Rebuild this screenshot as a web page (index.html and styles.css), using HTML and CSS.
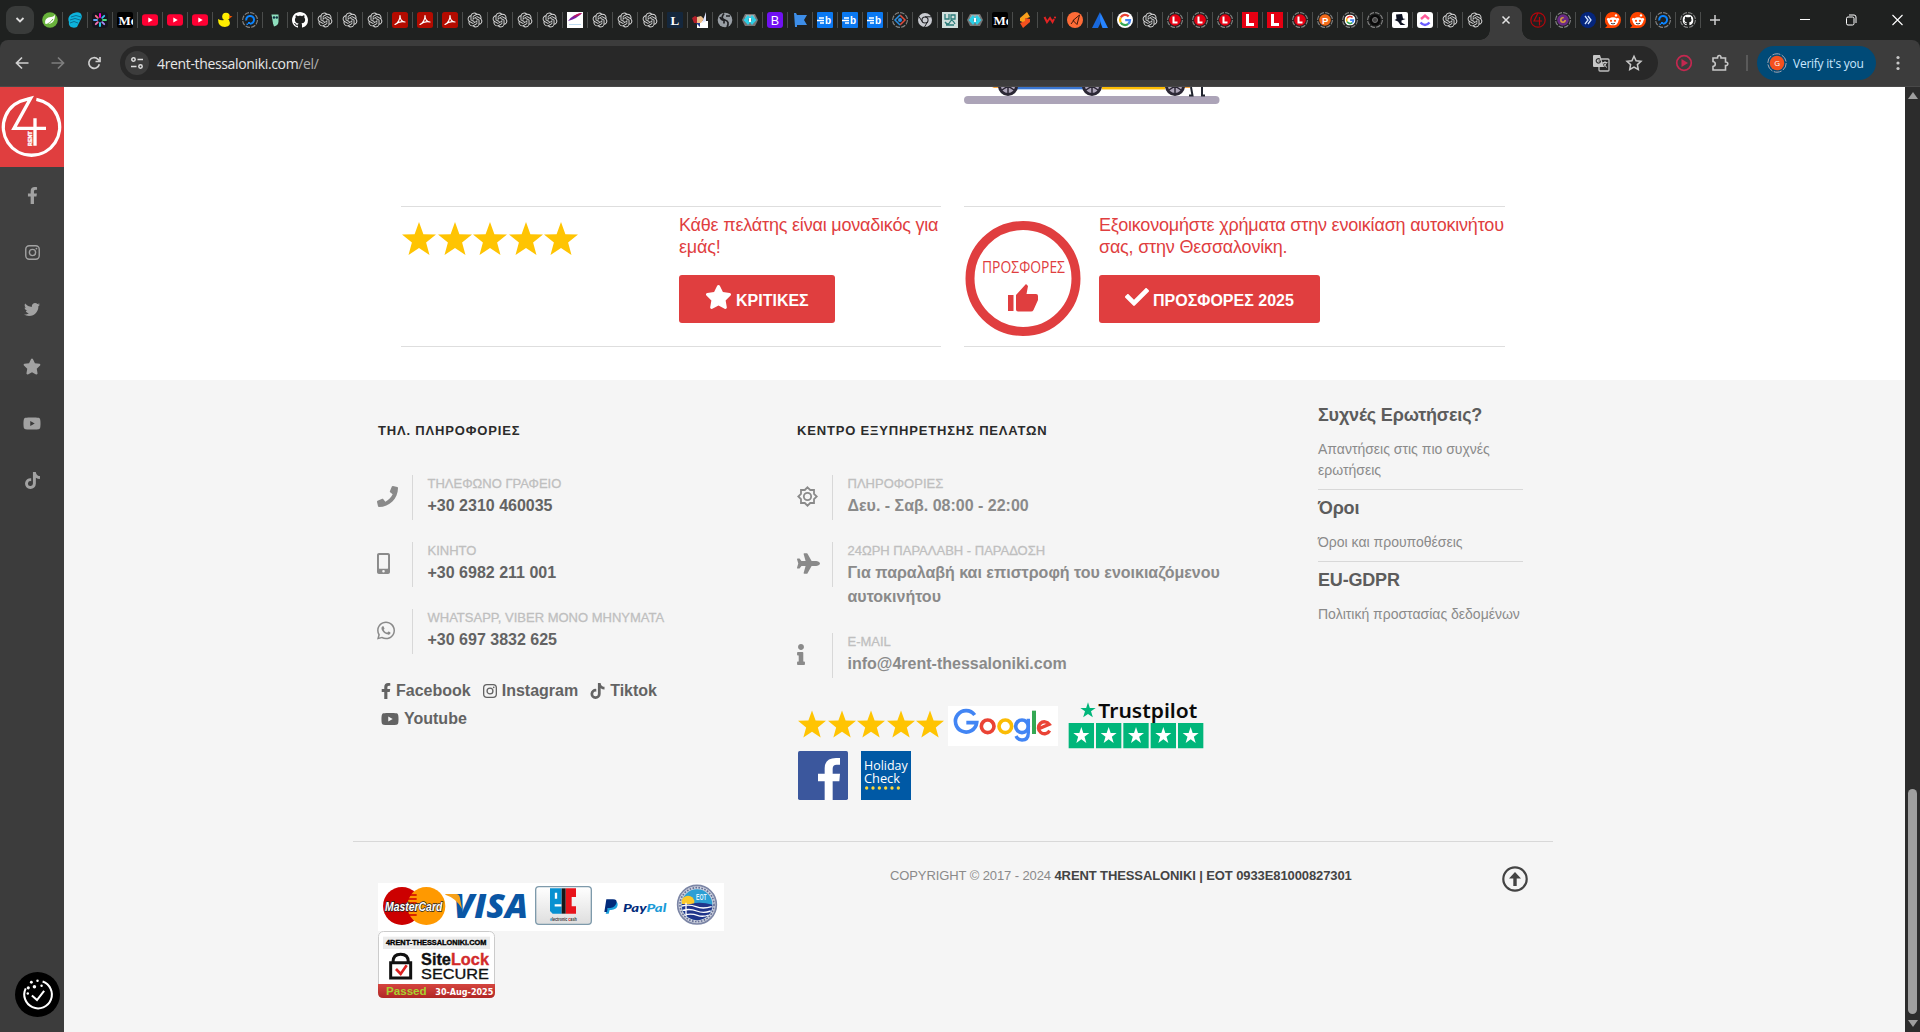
FILE: index.html
```html
<!DOCTYPE html>
<html lang="el">
<head>
<meta charset="utf-8">
<title>4Rent Thessaloniki</title>
<link rel="stylesheet" href="styles.css">
</head>
<body>
<svg class="defs" aria-hidden="true">
  <defs>
    <symbol id="ring" viewBox="0 0 16 16"><circle cx="8" cy="8" r="7.4" fill="none" stroke="#858585" stroke-width="1.1" stroke-dasharray="4.6 1.2"/></symbol>
    <symbol id="t-leaf" viewBox="0 0 16 16"><circle cx="8" cy="8" r="7.8" fill="#68b23b"/><path d="M13 2.500C13 10 10 12.500 3.500 12C2 8 5 5 9 5C11 5 12.300 4 13 2.500Z" fill="#fff"/><path d="M3 13C7 11.500 9 10 11 7" stroke="#68b23b" fill="none"/></symbol>
    <symbol id="t-shell" viewBox="0 0 16 16"><path d="M7 1C12-1 16 2 14.500 6L10 15C5 17 1 14 2 10C0 6 3 2 7 1Z" fill="#0db3dc"/><path d="M4 5Q9 2 14 5M3 8Q8 5 13 8M3 11Q7 8 11 11" stroke="#0a6e92" fill="none"/></symbol>
    <symbol id="t-spark" viewBox="0 0 16 16"><rect width="16" height="16" rx="4" fill="#15151d"/><g stroke-width="1.900" stroke-linecap="round"><path d="M8 2v3" stroke="#f0c"/><path d="M12.200 3.800l-2 2" stroke="#38bdf8"/><path d="M14 8h-3" stroke="#4ade80"/><path d="M12.200 12.200l-2-2" stroke="#a78bfa"/><path d="M8 14v-3" stroke="#22d3ee"/><path d="M3.800 12.200l2-2" stroke="#f472b6"/><path d="M2 8h3" stroke="#60a5fa"/><path d="M3.800 3.800l2 2" stroke="#fb7185"/></g></symbol>
    <symbol id="t-me" viewBox="0 0 16 16"><rect width="16" height="16" rx="2" fill="#000"/><text x="1.500" y="12.500" class="serif" font-weight="bold" font-size="13" fill="#fff">Me</text></symbol>
    <symbol id="t-yt" viewBox="0 0 16 16"><rect y="2.300" width="16" height="11.400" rx="3" fill="#ff0033"/><path d="M6.300 5.500v5L10.700 8z" fill="#fff"/></symbol>
    <symbol id="t-duck" viewBox="0 0 16 16"><circle cx="9" cy="4.500" r="3.800" fill="#fe0"/><path d="M1 7q3 2 6 1l5 0q3 6-4 7Q1 15 1 7z" fill="#fe0"/><path d="M12 3.500l3.500 1-3 1.700z" fill="#f50"/></symbol>
    <symbol id="t-do" viewBox="0 0 16 16"><use href="#ring"/><path d="M8 11.700A3.900 3.900 0 1 0 4.300 8.500" fill="none" stroke="#0a84ff" stroke-width="2"/><path d="M6 10h2v2H6zM4.500 11.500H6V13H4.500z" fill="#0a84ff"/></symbol>
    <symbol id="t-owl" viewBox="0 0 16 16"><path d="M4.500 2.500h7v7q0 4-4.500 5l-1-3z" fill="#8fe0be"/><circle cx="7" cy="5.500" r="1.300" fill="#134"/><circle cx="9.800" cy="5.500" r="1.200" fill="#134"/></symbol>
    <symbol id="t-gh" viewBox="0 0 16 16"><path fill="#fff" d="M8 0C3.580 0 0 3.580 0 8c0 3.540 2.290 6.530 5.470 7.590.4.070.55-.17.55-.38 0-.19-.01-.82-.01-1.490-2.010.37-2.530-.49-2.690-.94-.09-.23-.48-.94-.82-1.130-.28-.15-.68-.52-.01-.53.63-.01 1.080.58 1.230.82.72 1.210 1.870.87 2.330.66.070-.52.28-.87.51-1.070-1.780-.2-3.640-.89-3.640-3.950 0-.87.31-1.590.82-2.150-.08-.2-.36-1.020.080-2.120 0 0 .67-.21 2.200.82.64-.18 1.320-.27 2-.27s1.360.090 2 .27c1.530-1.040 2.200-.82 2.200-.82.44 1.100.16 1.920.080 2.120.51.56.82 1.270.82 2.150 0 3.070-1.870 3.750-3.650 3.950.29.25.54.73.54 1.480 0 1.070-.01 1.930-.01 2.200 0 .21.15.46.55.38A8.010 8.010 0 0 0 16 8c0-4.420-3.580-8-8-8z"/></symbol>
    <symbol id="t-gpt" viewBox="-1 -1 26 26"><path fill="#d8d8d8" d="M22.2819 9.8211a5.9847 5.9847 0 0 0-.5157-4.9108 6.0462 6.0462 0 0 0-6.5098-2.9A6.0651 6.0651 0 0 0 4.9807 4.1818a5.9847 5.9847 0 0 0-3.9977 2.9 6.0462 6.0462 0 0 0 .7427 7.0966 5.98 5.98 0 0 0 .511 4.9107 6.051 6.051 0 0 0 6.5146 2.9001A5.9847 5.9847 0 0 0 13.2599 24a6.0557 6.0557 0 0 0 5.7718-4.2058 5.9894 5.9894 0 0 0 3.9977-2.9001 6.0557 6.0557 0 0 0-.7475-7.0729zm-9.022 12.6081a4.4755 4.4755 0 0 1-2.8764-1.0408l.1419-.0804 4.7783-2.7582a.7948.7948 0 0 0 .3927-.6813v-6.7369l2.02 1.1686a.071.071 0 0 1 .038.052v5.5826a4.504 4.504 0 0 1-4.4945 4.4944zm-9.6607-4.1254a4.4708 4.4708 0 0 1-.5346-3.0137l.142.0852 4.783 2.7582a.7712.7712 0 0 0 .7806 0l5.8428-3.3685v2.3324a.0804.0804 0 0 1-.0332.0615L9.74 19.9502a4.4992 4.4992 0 0 1-6.1408-1.6464zM2.3408 7.8956a4.485 4.485 0 0 1 2.3655-1.9728V11.6a.7664.7664 0 0 0 .3879.6765l5.8144 3.3543-2.0201 1.1685a.0757.0757 0 0 1-.071 0l-4.8303-2.7865A4.504 4.504 0 0 1 2.3408 7.872zm16.5963 3.8558L13.1038 8.364 15.1192 7.2a.0757.0757 0 0 1 .071 0l4.8303 2.7913a4.4944 4.4944 0 0 1-.6765 8.1042v-5.6772a.79.79 0 0 0-.407-.667zm2.0107-3.0231l-.142-.0852-4.7735-2.7818a.7759.7759 0 0 0-.7854 0L9.409 9.2297V6.8974a.0662.0662 0 0 1 .0284-.0615l4.8303-2.7866a4.4992 4.4992 0 0 1 6.6802 4.66zM8.3065 12.863l-2.02-1.1638a.0804.0804 0 0 1-.038-.0567V6.0742a4.4992 4.4992 0 0 1 7.3757-3.4537l-.142.0805L8.704 5.459a.7948.7948 0 0 0-.3927.6813zm1.0976-2.3654l2.602-1.4998 2.6069 1.4998v2.9994l-2.5974 1.4997-2.6067-1.4997Z"/></symbol>
    <symbol id="t-pdf" viewBox="0 0 16 16"><rect width="16" height="16" rx="2.500" fill="#b30b00"/><path d="M3 12.500C6 11 8.300 7 8 3.500C7.800 7 10 10 13 10C9.500 9 6 10 3 12.500Z" fill="none" stroke="#fff" stroke-width="1.200" stroke-linejoin="round"/></symbol>
    <symbol id="t-feather" viewBox="0 0 16 16"><rect width="16" height="16" fill="#fff"/><path d="M1 9Q6 2 15 1Q11 6 1 9z" fill="#7b1fa2"/><path d="M6 5Q10 1 15 1Q12 4 6 5z" fill="#c2185b"/><path d="M2 12.500h12" stroke="#bcd9ee"/></symbol>
    <symbol id="t-ln" viewBox="0 0 16 16"><rect width="16" height="16" rx="1" fill="#14273d"/><text x="3.500" y="12.500" class="serif" font-weight="bold" font-size="13" fill="#fff">L</text></symbol>
    <symbol id="t-pic" viewBox="0 0 16 16"><path d="M5 9h11v7H5z" fill="#fff"/><path d="M0 6l3-2 4 2v5H2z" fill="#b3202a"/><path d="M5 5l4-1 3 3-3 4H5z" fill="#eebf8c"/><path d="M14 0v9l-4 2z" fill="#dfe4ff"/><path d="M4 11h4v4z" fill="#223a8c"/></symbol>
    <symbol id="t-globe" viewBox="0 0 16 16"><circle cx="8" cy="8" r="7.300" fill="#9aa0a6"/><path d="M7 1.500q-4 5 1 6.500t2 7M3 5q1 3 4 3.500v3M9 4h4" stroke="#202124" stroke-width="1.700" fill="none"/></symbol>
    <symbol id="t-cyan" viewBox="0 0 16 16"><path d="M3 2h10l3 6-3 6H3L0 8z" fill="#777"/><path d="M4 3h8l1 3H3z" fill="#aaa"/><path d="M6 3L1.500 8 6 13l2-2.500L6 8l2-2.500zM10 3l4.500 5-4.500 5-2-2.500L10 8 8 5.500z" fill="#2bd0e8"/><path d="M7 6h2v4H7z" fill="#fff"/></symbol>
    <symbol id="t-b" viewBox="0 0 16 16"><rect width="16" height="16" rx="3" fill="#7011f2"/><text x="3.700" y="12.600" font-size="12.500" fill="#fff">B</text></symbol>
    <symbol id="t-flag" viewBox="0 0 16 16"><path d="M2 1h2l1 2h10l-3 5 3 5H5v2H3z" fill="#3d8ee8"/></symbol>
    <symbol id="t-eb" viewBox="0 0 16 16"><rect width="16" height="16" rx="1" fill="#0a78f0"/><path d="M2 6h5M0 8.500h7M3 11h4" stroke="#fff" stroke-width="1.300"/><text x="8" y="11.800" font-weight="bold" font-size="10" fill="#fff">b</text></symbol>
    <symbol id="t-diamond" viewBox="0 0 16 16"><use href="#ring"/><path d="M8 3L13 8 8 13" fill="none" stroke="#e24a3b" stroke-width="1.500"/><path d="M8 3L3 8l5 5" fill="none" stroke="#2b8de0" stroke-width="1.500"/><circle cx="8" cy="8" r="2" fill="#2b8de0"/></symbol>
    <symbol id="t-chrome" viewBox="0 0 16 16"><circle cx="8" cy="8" r="7" fill="#c9cbd0"/><circle cx="8" cy="8" r="3.600" fill="#202124"/><circle cx="8" cy="8" r="2.500" fill="#c9cbd0"/><path d="M8 4.800h6.500M5 9.500L2 4.500M10.500 10l-3 5" stroke="#202124"/></symbol>
    <symbol id="t-teal" viewBox="0 0 16 16"><rect width="16" height="16" fill="#cfdfdc"/><path d="M3 2v5h4V2M9 3h4v4H9zM3 10q3 4 5 0t5 2M4 13h8" stroke="#2b7c79" stroke-width="1.300" fill="none"/></symbol>
    <symbol id="t-s" viewBox="0 0 16 16"><path d="M10 0L3 6v3l5 2V7l5-2z" fill="#f9a01b"/><path d="M6 16l7-6V7L8 6v3l-5 2z" fill="#f4511e"/></symbol>
    <symbol id="t-w" viewBox="0 0 16 16"><path d="M2.500 5l2.500 5 3-4 2.500 4 1.500-3" fill="none" stroke="#e22323" stroke-width="2"/><circle cx="13" cy="5.500" r="1.100" fill="#e22323"/></symbol>
    <symbol id="t-post" viewBox="0 0 16 16"><circle cx="8" cy="8" r="8" fill="#ff6c37"/><path d="M12.500 3L6 8.500l4 4zM7 8l-3 4" stroke="#40180a" fill="none"/></symbol>
    <symbol id="t-atl" viewBox="0 0 16 16"><path d="M8 0q3 8-2 16H0z" fill="#1868db"/><path d="M8.500 1L16 16h-5.500Q7 9 8.500 1z" fill="#2684ff"/></symbol>
    <symbol id="gmark" viewBox="0 0 16 16"><circle cx="8" cy="8" r="8" fill="#fff"/><g fill="none" stroke-width="2.300"><path d="M11.700 4.400A5 5 0 0 0 3.700 5.500" stroke="#ea4335"/><path d="M3.700 5.500a5 5 0 0 0 0 5" stroke="#fbbc05"/><path d="M3.700 10.500a5 5 0 0 0 7.500 1.400" stroke="#34a853"/><path d="M11.200 11.900A5 5 0 0 0 13 8.200H8.200" stroke="#4285f4"/></g></symbol>
    <symbol id="t-l" viewBox="0 0 16 16"><use href="#ring"/><circle cx="8" cy="8" r="5.800" fill="#e60012"/><path d="M6.500 4.500v6h4" stroke="#fff" stroke-width="2" fill="none"/></symbol>
    <symbol id="t-lsq" viewBox="0 0 16 16"><rect width="16" height="16" fill="#e60012"/><path d="M5.500 2v10.500H12" stroke="#fff" stroke-width="3" fill="none"/></symbol>
    <symbol id="t-p" viewBox="0 0 16 16"><use href="#ring"/><circle cx="8" cy="8" r="5.800" fill="#f26a1b"/><text x="5" y="11.500" font-weight="bold" font-size="9.500" fill="#fff">P</text></symbol>
    <symbol id="t-gr" viewBox="0 0 16 16"><use href="#ring"/><use href="#gmark" x="2.500" y="2.500" width="11" height="11"/></symbol>
    <symbol id="t-dark" viewBox="0 0 16 16"><use href="#ring"/><circle cx="8" cy="8" r="5.500" fill="#090909"/><circle cx="8" cy="8" r="2.500" fill="#444" stroke="#777"/></symbol>
    <symbol id="t-hat" viewBox="0 0 16 16"><rect width="16" height="16" rx="2" fill="#fff"/><path d="M4 2.500l6-.5 1 4.500 2.500.5-4 1.500v2l4 2.500H8.500L6 9.500 2.500 8l2-1z" fill="#0c1120"/></symbol>
    <symbol id="t-cu" viewBox="0 0 16 16"><rect width="16" height="16" rx="3" fill="#fff"/><path d="M4 7l4-3.500L12 7" fill="none" stroke="#ff5c9a" stroke-width="2.400"/><path d="M3.500 10.500q4.500 5 9 0" fill="none" stroke="#6a5cff" stroke-width="2.400"/></symbol>
    <symbol id="t-4" viewBox="0 0 16 16"><circle cx="8" cy="8" r="7.200" fill="none" stroke="#b3060c" stroke-width="1.200"/><path d="M8 1L4 9h8M9.500 5v8.500" fill="none" stroke="#b3060c" stroke-width="1.200"/></symbol>
    <symbol id="t-c" viewBox="0 0 16 16"><use href="#ring"/><circle cx="8" cy="8" r="5.800" fill="#6b2a86"/><circle cx="8" cy="8" r="2.200" fill="none" stroke="#d8a13a" stroke-width="1.500" stroke-dasharray="10 4"/></symbol>
    <symbol id="t-ch" viewBox="0 0 16 16"><circle cx="8" cy="8" r="8" fill="#04257c"/><path d="M5 4l3 4-3 4M8 4l3 4-3 4" fill="none" stroke="#cfe2ff" stroke-width="1.300"/></symbol>
    <symbol id="t-rd" viewBox="0 0 16 16"><path d="M8 0a8 8 0 1 1 0 16H0l2.300-2.300A8 8 0 0 1 8 0z" fill="#ff4500"/><ellipse cx="8" cy="9.300" rx="5.200" ry="4" fill="#fff"/><circle cx="3.300" cy="7.500" r="1.400" fill="#fff"/><circle cx="12.700" cy="7.500" r="1.400" fill="#fff"/><circle cx="11" cy="3.400" r="1.200" fill="#fff"/><circle cx="6" cy="8.800" r="1.100" fill="#ff4500"/><circle cx="10" cy="8.800" r="1.100" fill="#ff4500"/><path d="M6 11.300q2 1.300 4 0" stroke="#111" fill="none" stroke-width=".8"/></symbol>
    <symbol id="t-ghr" viewBox="0 0 16 16"><use href="#ring"/><use href="#t-gh" x="2.500" y="2.500" width="11" height="11"/></symbol>

    <symbol id="facebook" viewBox="0 0 320 512"><path d="M279.14 288l14.22-92.66h-88.91v-60.13c0-25.35 12.42-50.06 52.24-50.06h40.42V6.26S260.43 0 225.36 0c-73.22 0-121.08 44.38-121.08 124.72v70.62H22.89V288h81.39v224h100.17V288z"/></symbol>
    <symbol id="instagram" viewBox="0 0 448 512"><rect x="21" y="53" width="406" height="406" rx="105" fill="none" stroke="currentColor" stroke-width="42"/><circle cx="224" cy="256" r="94" fill="none" stroke="currentColor" stroke-width="42"/><circle cx="343" cy="137" r="27"/></symbol>
    <symbol id="twitter" viewBox="0 0 512 512"><path d="M459.37 151.716c.325 4.548.325 9.097.325 13.645 0 138.72-105.583 298.558-298.558 298.558-59.452 0-114.68-17.219-161.137-47.106 8.447.974 16.568 1.299 25.34 1.299 49.055 0 94.213-16.568 130.274-44.832-46.132-.975-84.792-31.188-98.112-72.772 6.498.974 12.995 1.624 19.818 1.624 9.421 0 18.843-1.3 27.614-3.573-48.081-9.747-84.143-51.98-84.143-102.985v-1.299c13.969 7.797 30.214 12.67 47.431 13.319-28.264-18.843-46.781-51.005-46.781-87.391 0-19.492 5.197-37.36 14.294-52.954 51.655 63.675 129.3 105.258 216.365 109.807-1.624-7.797-2.599-15.918-2.599-24.04 0-57.828 46.782-104.934 104.934-104.934 30.213 0 57.502 12.67 76.67 33.137 23.715-4.548 46.456-13.32 66.599-25.34-7.798 24.366-24.366 44.833-46.132 57.827 21.117-2.273 41.584-8.122 60.426-16.243-14.292 20.791-32.161 39.308-52.628 54.253z"/></symbol>
    <symbol id="star" viewBox="0 0 576 512"><path d="M259.3 17.8L194 150.2 47.9 171.5c-26.2 3.8-36.7 36.1-17.7 54.6l105.7 103-25 145.5c-4.5 26.3 23.2 46 46.4 33.7L288 439.6l130.7 68.7c23.2 12.2 50.9-7.4 46.4-33.7l-25-145.5 105.7-103c19-18.5 8.5-50.8-17.7-54.6L382 150.2 316.7 17.8c-11.7-23.6-45.600-23.900-57.400 0z"/></symbol>
    <symbol id="youtube" viewBox="0 0 576 512"><path d="M549.655 124.083c-6.281-23.65-24.787-42.276-48.284-48.597C458.781 64 288 64 288 64S117.22 64 74.629 75.486c-23.497 6.322-42.003 24.947-48.284 48.597-11.412 42.867-11.412 132.305-11.412 132.305s0 89.438 11.412 132.305c6.281 23.65 24.787 41.5 48.284 47.821C117.22 448 288 448 288 448s170.78 0 213.371-11.486c23.497-6.321 42.003-24.171 48.284-47.821 11.412-42.867 11.412-132.305 11.412-132.305s0-89.438-11.412-132.305zm-317.51 213.508V175.185l142.739 81.205-142.739 81.201z"/></symbol>
    <symbol id="tiktok" viewBox="0 0 448 512"><path d="M448 209.91a210.06 210.06 0 0 1-122.77-39.25v178.72A162.55 162.55 0 1 1 185 188.31v89.89a74.62 74.62 0 1 0 52.23 71.18V0h88a121.18 121.18 0 0 0 1.860 22.17A122.18 122.18 0 0 0 381 102.39a121.43 121.43 0 0 0 67 20.14z"/></symbol>
    <symbol id="phone" viewBox="0 0 512 512"><path d="M493.4 24.6l-104-24c-11.3-2.6-22.9 3.3-27.5 13.9l-48 112c-4.2 9.8-1.4 21.3 6.9 28l60.6 49.6c-36 76.7-98.9 140.5-177.2 177.2l-49.6-60.6c-6.8-8.3-18.2-11.1-28-6.9l-112 48C3.9 366.5-2 378.1.6 389.4l24 104C27.1 504.2 36.7 512 48 512c256.1 0 464-207.5 464-464 0-11.2-7.7-20.9-18.6-23.4z"/></symbol>
    <symbol id="mobile" viewBox="0 0 320 512"><path fill-rule="evenodd" d="M272 0H48C21.500 0 0 21.500 0 48v416c0 26.500 21.500 48 48 48h224c26.500 0 48-21.500 48-48V48c0-26.500-21.500-48-48-48zM160 480a32 32 0 1 1 0-64 32 32 0 0 1 0 64zm112-108c0 6.600-5.400 12-12 12H60c-6.600 0-12-5.400-12-12V60c0-6.600 5.400-12 12-12h200c6.600 0 12 5.400 12 12z"/></symbol>
    <symbol id="whatsapp" viewBox="0 0 448 512"><path d="M380.9 97.1C339 55.1 283.2 32 223.9 32c-122.4 0-222 99.6-222 222 0 39.1 10.2 77.3 29.6 111L0 480l117.7-30.9c32.4 17.7 68.9 27 106.1 27h.1c122.3 0 224.1-99.6 224.1-222 0-59.3-25.2-115-67.1-157zm-157 341.6c-33.2 0-65.7-8.9-94-25.7l-6.7-4-69.8 18.3L72 359.2l-4.4-7c-18.5-29.4-28.2-63.3-28.2-98.2 0-101.7 82.8-184.5 184.6-184.5 49.3 0 95.6 19.2 130.4 54.1 34.8 34.9 56.2 81.2 56.1 130.5 0 101.8-84.9 184.6-186.6 184.6zm101.2-138.2c-5.5-2.8-32.8-16.2-37.9-18-5.1-1.9-8.8-2.8-12.5 2.8-3.7 5.6-14.3 18-17.6 21.8-3.2 3.7-6.5 4.2-12 1.4-32.6-16.3-54-29.1-75.5-66-5.7-9.8 5.7-9.1 16.3-30.3 1.8-3.7.9-6.9-.5-9.7-1.4-2.8-12.5-30.1-17.1-41.2-4.5-10.8-9.1-9.3-12.5-9.5-3.2-.2-6.9-.2-10.6-.2-3.7 0-9.7 1.4-14.8 6.9-5.1 5.6-19.4 19-19.4 46.3 0 27.3 19.9 53.7 22.6 57.4 2.8 3.7 39.1 59.7 94.8 83.8 35.2 15.2 49 16.5 66.6 13.9 10.7-1.6 32.8-13.4 37.4-26.4 4.6-13 4.6-24.1 3.2-26.4-1.3-2.5-5-3.9-10.5-6.6z"/></symbol>
    <symbol id="gear" viewBox="0 0 20 20"><path d="M10 1.200l2.600 2.600h3.600v3.600L18.800 10l-2.600 2.600v3.600h-3.600L10 18.800l-2.600-2.600H3.800v-3.600L1.200 10l2.600-2.600V3.800h3.600z" fill="none" stroke="currentColor" stroke-width="1.700"/><circle cx="10" cy="10" r="3.500" fill="none" stroke="currentColor" stroke-width="1.700"/></symbol>
    <symbol id="plane" viewBox="0 0 576 512"><path d="M480 192H365.71L260.61 8.06A16.014 16.014 0 0 0 246.71 0h-65.5c-10.63 0-18.3 10.17-15.38 20.39L214.86 192H112l-43.2-57.6c-3.02-4.03-7.77-6.4-12.8-6.4H16.01C5.6 128-2.04 137.78.49 147.88L32 256 .49 364.12C-2.04 374.22 5.6 384 16.01 384H56c5.04 0 9.78-2.37 12.8-6.4L112 320h102.86l-49.03 171.6c-2.92 10.22 4.75 20.4 15.38 20.4h65.5c5.74 0 11.04-3.08 13.89-8.06L365.71 320H480c35.35 0 96-28.65 96-64s-60.65-64-96-64z"/></symbol>
    <symbol id="info" viewBox="0 0 192 512"><path d="M20 424.229h20V279.771H20c-11.046 0-20-8.954-20-20V212c0-11.046 8.954-20 20-20h112c11.046 0 20 8.954 20 20v212.229h20c11.046 0 20 8.954 20 20V492c0 11.046-8.954 20-20 20H20c-11.046 0-20-8.954-20-20v-47.771c0-11.046 8.954-20 20-20zM96 0C56.235 0 24 32.235 24 72s32.235 72 72 72 72-32.235 72-72S135.764 0 96 0z"/></symbol>
    <symbol id="check" viewBox="0 0 512 512"><path d="M173.898 439.404l-166.4-166.4c-9.997-9.997-9.997-26.206 0-36.204l36.203-36.204c9.997-9.998 26.207-9.998 36.204 0L192 312.69 432.095 72.596c9.997-9.997 26.207-9.997 36.204 0l36.203 36.204c9.997 9.997 9.997 26.206 0 36.204l-294.4 294.401c-9.998 9.997-26.207 9.997-36.204-.001z"/></symbol>
    <symbol id="point-star" viewBox="0 0 34 33"><path d="M17 0l4.400 12.300 12.600.300-9.900 8L27.500 33 17 26 6.500 33l3.400-12.400-9.900-8 12.600-.300z"/></symbol>
  </defs>
</svg>

<header class="browser">
  <div class="tabstrip">
    <button class="tab-search"><svg width="10" height="10" viewBox="0 0 10 10"><path d="M1.500 3l3.500 3.500L8.500 3" fill="none" stroke="#ddd" stroke-width="1.800"/></svg></button>
    <i class="tab"><svg><use href="#t-leaf"/></svg></i><i class="tab"><svg><use href="#t-shell"/></svg></i><i class="tab"><svg><use href="#t-spark"/></svg></i><i class="tab"><svg><use href="#t-me"/></svg></i><i class="tab"><svg><use href="#t-yt"/></svg></i><i class="tab"><svg><use href="#t-yt"/></svg></i><i class="tab"><svg><use href="#t-yt"/></svg></i><i class="tab"><svg><use href="#t-duck"/></svg></i><i class="tab"><svg><use href="#t-do"/></svg></i><i class="tab"><svg><use href="#t-owl"/></svg></i>
    <i class="tab"><svg><use href="#t-gh"/></svg></i><i class="tab"><svg><use href="#t-gpt"/></svg></i><i class="tab"><svg><use href="#t-gpt"/></svg></i><i class="tab"><svg><use href="#t-gpt"/></svg></i><i class="tab"><svg><use href="#t-pdf"/></svg></i><i class="tab"><svg><use href="#t-pdf"/></svg></i><i class="tab"><svg><use href="#t-pdf"/></svg></i><i class="tab"><svg><use href="#t-gpt"/></svg></i><i class="tab"><svg><use href="#t-gpt"/></svg></i><i class="tab"><svg><use href="#t-gpt"/></svg></i>
    <i class="tab"><svg><use href="#t-gpt"/></svg></i><i class="tab"><svg><use href="#t-feather"/></svg></i><i class="tab"><svg><use href="#t-gpt"/></svg></i><i class="tab"><svg><use href="#t-gpt"/></svg></i><i class="tab"><svg><use href="#t-gpt"/></svg></i><i class="tab"><svg><use href="#t-ln"/></svg></i><i class="tab"><svg><use href="#t-pic"/></svg></i><i class="tab"><svg><use href="#t-globe"/></svg></i><i class="tab"><svg><use href="#t-cyan"/></svg></i><i class="tab"><svg><use href="#t-b"/></svg></i>
    <i class="tab"><svg><use href="#t-flag"/></svg></i><i class="tab"><svg><use href="#t-eb"/></svg></i><i class="tab"><svg><use href="#t-eb"/></svg></i><i class="tab"><svg><use href="#t-eb"/></svg></i><i class="tab"><svg><use href="#t-diamond"/></svg></i><i class="tab"><svg><use href="#t-chrome"/></svg></i><i class="tab"><svg><use href="#t-teal"/></svg></i><i class="tab"><svg><use href="#t-cyan"/></svg></i><i class="tab"><svg><use href="#t-me"/></svg></i><i class="tab"><svg><use href="#t-s"/></svg></i>
    <i class="tab"><svg><use href="#t-w"/></svg></i><i class="tab"><svg><use href="#t-post"/></svg></i><i class="tab"><svg><use href="#t-atl"/></svg></i><i class="tab"><svg><use href="#gmark"/></svg></i><i class="tab"><svg><use href="#t-gpt"/></svg></i><i class="tab"><svg><use href="#t-l"/></svg></i><i class="tab"><svg><use href="#t-l"/></svg></i><i class="tab"><svg><use href="#t-l"/></svg></i><i class="tab"><svg><use href="#t-lsq"/></svg></i><i class="tab"><svg><use href="#t-lsq"/></svg></i>
    <i class="tab"><svg><use href="#t-l"/></svg></i><i class="tab"><svg><use href="#t-p"/></svg></i><i class="tab"><svg><use href="#t-gr"/></svg></i><i class="tab"><svg><use href="#t-dark"/></svg></i><i class="tab"><svg><use href="#t-hat"/></svg></i><i class="tab"><svg><use href="#t-cu"/></svg></i><i class="tab"><svg><use href="#t-gpt"/></svg></i><i class="tab tab-last"><svg><use href="#t-gpt"/></svg></i>
    <div class="tab-active"><svg width="10" height="10" viewBox="0 0 10 10"><path d="M1.500 1.500l7 7M8.500 1.500l-7 7" stroke="#e3e3e3" stroke-width="1.500"/></svg></div>
    <i class="tab"><svg><use href="#t-4"/></svg></i><i class="tab"><svg><use href="#t-c"/></svg></i><i class="tab"><svg><use href="#t-ch"/></svg></i><i class="tab"><svg><use href="#t-rd"/></svg></i><i class="tab"><svg><use href="#t-rd"/></svg></i><i class="tab"><svg><use href="#t-do"/></svg></i><i class="tab"><svg><use href="#t-ghr"/></svg></i>
    <svg class="new-tab" width="12" height="12" viewBox="0 0 12 12"><path d="M6 1v10M1 6h10" stroke="#d0d0d0" stroke-width="1.500"/></svg>
    <div class="window-controls">
      <svg width="10" height="12" viewBox="0 0 10 12"><path d="M0 5.500h10" stroke="#fff"/></svg>
      <svg width="11" height="12" viewBox="0 0 11 12"><rect x=".5" y="3" width="7.500" height="8" rx="1.500" fill="none" stroke="#fff"/><path d="M3 1h5q2 0 2 2v6" fill="none" stroke="#fff"/></svg>
      <svg width="11" height="12" viewBox="0 0 11 12"><path d="M.5 1l10 10M10.500 1L.5 11" stroke="#fff" stroke-width="1.100"/></svg>
    </div>
  </div>
  <div class="toolbar">
    <div class="nav">
      <svg width="16" height="16" viewBox="0 0 16 16"><path d="M14.500 8H2.500M8 2.500L2.500 8 8 13.500" fill="none" stroke="#d0d0d0" stroke-width="1.700"/></svg>
      <svg width="16" height="16" viewBox="0 0 16 16"><path d="M1.500 8h12M8 2.500L13.500 8 8 13.500" fill="none" stroke="#7e7e7e" stroke-width="1.700"/></svg>
      <svg width="16" height="16" viewBox="0 0 16 16"><path d="M13.300 9.200A5.300 5.300 0 1 1 11.800 4.200L13.500 6" fill="none" stroke="#d0d0d0" stroke-width="1.700"/><path d="M14 2v4.500H9.500" fill="none" stroke="#d0d0d0" stroke-width="1.700"/></svg>
    </div>
    <div class="omnibox">
      <span class="site-info"><svg width="14" height="14" viewBox="0 0 14 14"><g fill="none" stroke="#ddd" stroke-width="1.500"><circle cx="3.500" cy="3.500" r="1.700"/><path d="M7.500 3.500H13M1 10.500h5.500"/><circle cx="10.500" cy="10.500" r="1.700"/></g></svg></span>
      <span class="url">4rent-thessaloniki.com<span class="path">/el/</span></span>
      <svg class="translate" width="18" height="18" viewBox="0 0 18 18"><rect x="7" y="5" width="10" height="12" rx="1" fill="none" stroke="#bdbdbd" stroke-width="1.300"/><path d="M1 2q0-1 1-1h6l4 12H2q-1 0-1-1z" fill="#c7c7c7"/><path d="M8 5.300A2.200 2.200 0 1 0 8.600 7H6.500" fill="none" stroke="#333" stroke-width="1.200"/><path d="M10.500 8.500h5M13 7v1.500M14.500 8.500q-1 3-3 4.500M11.500 9q1 3 3.500 4.500" stroke="#c7c7c7" fill="none"/></svg>
      <svg width="18" height="18" viewBox="0 0 18 18"><path d="M9 2.200l2.100 4.500 4.900.6-3.600 3.300.9 4.900L9 13.100l-4.300 2.400.9-4.900L2 7.300l4.900-.6z" fill="none" stroke="#c7c7c7" stroke-width="1.500"/></svg>
    </div>
    <div class="actions">
      <svg width="18" height="18" viewBox="0 0 18 18"><circle cx="9" cy="9" r="7.300" fill="none" stroke="#c42850" stroke-width="1.700"/><path d="M6.500 5l6.500 4-6.500 4z" fill="#c42850"/></svg>
      <svg class="puzzle" width="18" height="18" viewBox="0 0 18 18"><path d="M2 4h4.500q0-2.500 1.800-2.500T10 4h4.500v4q2.300 0 2.300 1.800T14.500 11.500v4.500H2v-3.500q2.300-.5 2.300-2.500T2 7.500z" fill="none" stroke="#c7c7c7" stroke-width="1.600"/></svg>
      <span class="divider"></span>
      <span class="verify"><svg width="20" height="20" viewBox="0 0 20 20"><circle cx="10" cy="10" r="9.200" fill="none" stroke="#a7a7b3" stroke-width="1" stroke-dasharray="8 1.600"/><circle cx="10" cy="10" r="7.300" fill="#f4511e"/><text x="7.200" y="13" font-size="8" fill="#fff">G</text></svg>Verify it's you</span>
      <svg class="menu" width="4" height="16" viewBox="0 0 4 16"><g fill="#c7c7c7"><circle cx="2" cy="2.500" r="1.600"/><circle cx="2" cy="8" r="1.600"/><circle cx="2" cy="13.500" r="1.600"/></g></svg>
    </div>
  </div>
</header>

<div class="viewport">
  <aside class="sidebar">
    <div class="logo"><svg width="64" height="80" viewBox="0 0 192 240"><g fill="none" stroke="#fff" stroke-width="10"><path d="M109 37A84.500 84.500 0 1 1 80 37L92 34L42 124H138M105 94V176"/></g><text transform="translate(95 177) rotate(-90)" font-size="14.500" font-weight="bold" fill="#fff" stroke="#fff" textLength="44" lengthAdjust="spacingAndGlyphs">RENT</text></svg></div>
    <nav class="side-links">
      <svg width="11" height="16"><use href="#facebook"/></svg>
      <svg width="15" height="17"><use href="#instagram"/></svg>
      <svg width="16" height="16"><use href="#twitter"/></svg>
      <svg width="18" height="16"><use href="#star"/></svg>
      <svg width="18" height="16"><use href="#youtube"/></svg>
      <svg width="15" height="17"><use href="#tiktok"/></svg>
    </nav>
    <div class="cookie"><svg width="45" height="45" viewBox="0 0 44 44"><circle cx="22" cy="22" r="22" fill="#000"/><path d="M27 9.300A13.500 13.500 0 1 1 10.500 16" fill="none" stroke="#fff" stroke-width="2"/><path d="M16.500 23l5 4.500 7-9" fill="none" stroke="#fff" stroke-width="2"/><g fill="#fff"><circle cx="16" cy="10" r="1.400"/><circle cx="22" cy="8.500" r="1.200"/><circle cx="13" cy="15.500" r="1.500"/><circle cx="19" cy="14.500" r="1.700"/><circle cx="26" cy="13.500" r="1.200"/><circle cx="12.500" cy="21" r="1.200"/></g></svg></div>
  </aside>

  <main class="page">
    <section class="illustration">
      <svg width="258" height="18" viewBox="963 87 258 18"><rect x="964" y="96" width="255.500" height="8" rx="4" fill="#aca4b8"/><path d="M992 87h26v1h-24zM1160 87h30v1h-28z" fill="#f4a340"/><path d="M1016 87h68v2h-68z" fill="#3a76d2"/><path d="M1016 89h68v1h-68z" fill="#b8d2f6"/><path d="M1102 87h63v2h-63z" fill="#fcbc04"/><path d="M1102 89h63v1h-63z" fill="#fde08d"/><g fill="#aca4b8" stroke="#2b2735" stroke-width="3"><circle cx="1008" cy="86" r="8.500"/><circle cx="1092" cy="86" r="8.500"/><circle cx="1175" cy="86" r="8.500"/></g><path d="M1008 86v8M1002 90l6-4 6 4M1092 86v8M1086 90l6-4 6 4M1175 86v8M1169 90l6-4 6 4" stroke="#2b2735" stroke-width="1.500" fill="none"/><path d="M1191 87l1.500 8.500h-3.500M1202 87v8.500h3" stroke="#20242e" stroke-width="2" fill="none"/></svg>
    </section>

    <section class="promos">
      <article class="promo reviews">
        <div class="stars"><svg><use href="#point-star"/></svg><svg><use href="#point-star"/></svg><svg><use href="#point-star"/></svg><svg><use href="#point-star"/></svg><svg><use href="#point-star"/></svg></div>
        <div class="promo-text">
          <p>Κάθε πελάτης είναι μοναδικός για<br>εμάς!</p>
          <a class="button"><svg width="27" height="24"><use href="#star"/></svg><span>ΚΡΙΤΙΚΕΣ</span></a>
        </div>
      </article>
      <article class="promo offers">
        <svg class="offer-badge" width="116" height="116" viewBox="0 0 116 116"><circle cx="58" cy="58.500" r="53" fill="none" stroke="#e03e3f" stroke-width="9"/><text x="17" y="53" class="open" font-size="16.500" fill="#e03e3f" textLength="83" lengthAdjust="spacingAndGlyphs">ΠΡΟΣΦΟΡΕΣ</text><path d="M43 75h5.500v16H43zM51 75l10-11 2 2-1.500 8H71q2 0 2 2v4l-4.500 10q-.8 1.500-2.500 1.500H53q-2 0-2-2z" fill="#e03e3f"/></svg>
        <div class="promo-text">
          <p>Εξοικονομήστε χρήματα στην ενοικίαση αυτοκινήτου<br>σας, στην Θεσσαλονίκη.</p>
          <a class="button"><svg width="24" height="24"><use href="#check"/></svg><span>ΠΡΟΣΦΟΡΕΣ 2025</span></a>
        </div>
      </article>
    </section>

    <footer class="footer">
      <div class="columns">
        <section class="col col-phone">
          <h4>ΤΗΛ. ΠΛΗΡΟΦΟΡΙΕΣ</h4>
          <div class="item"><span class="ico"><svg width="21" height="21"><use href="#phone"/></svg></span><div><small>ΤΗΛΕΦΩΝΟ ΓΡΑΦΕΙΟ</small><b>+30 2310 460035</b></div></div>
          <div class="item"><span class="ico"><svg width="13" height="21"><use href="#mobile"/></svg></span><div><small>ΚΙΝΗΤΟ</small><b>+30 6982 211 001</b></div></div>
          <div class="item"><span class="ico"><svg width="18" height="21"><use href="#whatsapp"/></svg></span><div><small>WHATSAPP, VIBER ΜΟΝΟ ΜΗΝΥΜΑΤΑ</small><b>+30 697 3832 625</b></div></div>
          <div class="social">
            <a><svg width="10" height="16"><use href="#facebook"/></svg>Facebook</a>
            <a><svg width="14" height="16"><use href="#instagram"/></svg>Instagram</a>
            <a><svg width="15" height="16"><use href="#tiktok"/></svg>Tiktok</a>
            <a><svg width="18" height="16"><use href="#youtube"/></svg>Youtube</a>
          </div>
        </section>

        <section class="col col-service">
          <h4>ΚΕΝΤΡΟ ΕΞΥΠΗΡΕΤΗΣΗΣ ΠΕΛΑΤΩΝ</h4>
          <div class="item"><span class="ico"><svg width="21" height="21"><use href="#gear"/></svg></span><div><small>ΠΛΗΡΟΦΟΡΙΕΣ</small><b>Δευ. - Σαβ. 08:00 - 22:00</b></div></div>
          <div class="item"><span class="ico"><svg width="23" height="21"><use href="#plane"/></svg></span><div><small>24ΩΡΗ ΠΑΡΑΛΑΒΗ - ΠΑΡΑΔΟΣΗ</small><b>Για παραλαβή και επιστροφή του ενοικιαζόμενου αυτοκινήτου</b></div></div>
          <div class="item"><span class="ico"><svg width="8" height="21"><use href="#info"/></svg></span><div><small>E-MAIL</small><b>info@4rent-thessaloniki.com</b></div></div>
          <div class="badges">
            <div class="stars small"><svg><use href="#point-star"/></svg><svg><use href="#point-star"/></svg><svg><use href="#point-star"/></svg><svg><use href="#point-star"/></svg><svg><use href="#point-star"/></svg></div>
            <svg class="google" width="110" height="40" viewBox="0 0 330 120"><rect width="330" height="120" fill="#fff"/><g fill="none" stroke-width="11"><path d="M80 27A32 32 0 1 0 86 50H55" stroke="#4285f4" stroke-width="11"/><circle cx="119" cy="61" r="19" stroke="#ea4335"/><circle cx="172" cy="61" r="19" stroke="#fbbc05"/><circle cx="222" cy="61" r="19" stroke="#4285f4"/><path d="M241 38V80Q241 102 222 102Q209 102 204 90" stroke="#4285f4" stroke-width="10"/><path d="M258 14V84" stroke="#34a853" stroke-width="12"/><path d="M276 67L304 55A18 18 0 1 0 305 74" stroke="#ea4335" stroke-width="10"/></g></svg>
            <svg class="trust" width="136" height="48" viewBox="0 0 408 144"><path d="M60 1l5.500 17H83L69 28l5.500 18L60 36 45.500 46 51 28 37 18h17.500z" fill="#00b67a"/><text x="91" y="47" font-family="Noto Sans" font-weight="600" font-size="60" fill="#0a0a0a" textLength="297" lengthAdjust="spacingAndGlyphs">Trustpilot</text><g fill="#00b67a"><path d="M2 63h76v76H2zM84 63h76v76H84zM166 63h76v76h-76zM248 63h76v76h-76zM330 63h76v76h-76z"/></g><g fill="#fff"><path id="tp" d="M40 75l6 18h18L49.500 104l5.500 19-15-11.500L25 123l5.500-19L16 93h18z"/><use href="#tp" x="82"/><use href="#tp" x="164"/><use href="#tp" x="246"/><use href="#tp" x="328"/></g></svg>
            <svg class="fb" width="50" height="49" viewBox="0 0 150 147"><rect width="150" height="147" rx="5" fill="#3b579d"/><path d="M80 147V91H60V68h20V52q0-31 34-31h12v20h-10q-12 0-12 12v15h22l-2 23h-20v56z" fill="#fff"/></svg>
            <svg class="holiday" width="50" height="49" viewBox="0 0 150 147"><rect width="150" height="147" fill="#0059a5"/><g fill="#fff" font-family="Open Sans" font-size="40"><text x="9" y="57" textLength="131" lengthAdjust="spacingAndGlyphs">Holiday</text><text x="9" y="96" textLength="108" lengthAdjust="spacingAndGlyphs">Check</text></g><g fill="#ffd83a"><circle cx="17" cy="111" r="5"/><circle cx="36" cy="111" r="5"/><circle cx="55" cy="111" r="5"/><circle cx="74" cy="111" r="5"/><circle cx="93" cy="111" r="5"/><circle cx="112" cy="111" r="5"/></g></svg>
          </div>
        </section>

        <section class="col-links">
          <div><h3>Συχνές Ερωτήσεις?</h3><p>Απαντήσεις στις πιο συχνές ερωτήσεις</p></div>
          <div><h3>Όροι</h3><p>Όροι και προυποθέσεις</p></div>
          <div><h3>EU-GDPR</h3><p>Πολιτική προστασίας δεδομένων</p></div>
        </section>
      </div>

      <div class="bottom">
        <div class="trust-marks">
          <svg width="346" height="48" viewBox="84 159 1038 144">
            <rect x="84" y="159" width="1038" height="144" fill="#fff"/>
            <circle cx="156" cy="228" r="57" fill="#c00"/><circle cx="229" cy="228" r="57" fill="#f90"/><path d="M176 195h24M172 207h28M172 219h28M172 231h28M172 243h28M172 255h28" stroke="#c00" stroke-width="5"/>
            <text x="105" y="242" font-size="37" font-weight="bold" font-style="italic" fill="#fff" stroke="#222" stroke-width="4" paint-order="stroke" textLength="172" lengthAdjust="spacingAndGlyphs">MasterCard</text>
            <text x="310" y="265" class="open" font-size="103" font-weight="800" font-style="italic" fill="#0a56a4" textLength="224" lengthAdjust="spacingAndGlyphs">VISA</text><path d="M286 192h32q10 0 12 12l6 32q-18-32-50-42z" fill="#f7a11a"/>
            <linearGradient id="ecg" x2="0" y2="1"><stop stop-color="#fff"/><stop offset="1" stop-color="#dedede"/></linearGradient>
            <rect x="557" y="170" width="167" height="113" rx="10" fill="url(#ecg)" stroke="#7e9aab" stroke-width="4"/>
            <path d="M600 175h35v76h-27l-8-8z" fill="#0891d1"/><path d="M618 188v18M614 226h21" fill="none" stroke="#fff" stroke-width="7"/><path d="M647 175h31v26h-13v28h13v22h-31z" fill="#e8141b"/><path d="M635 175h12v76h-12z" fill="#181818"/>
            <text x="600" y="274" font-size="16" font-weight="bold" fill="#333" textLength="80" lengthAdjust="spacingAndGlyphs"><tspan fill="#0891d1">e</tspan>lectronic <tspan fill="#d11">c</tspan>ash</text>
            <path d="M779 215h20q6 4 3 14t-18 11h-5l-3 11h-9z" fill="#1da1dd"/><path d="M769 208h20q14 0 10 12t-18 14h-8l-2 12h-8z" fill="#022b7b"/>
            <text x="819" y="245" class="lato" font-size="36" font-weight="900" font-style="italic" fill="#022b7b" textLength="130" lengthAdjust="spacingAndGlyphs">Pay<tspan fill="#1a9bd8">Pal</tspan></text>
            <circle cx="1041" cy="224" r="58" fill="#cfd3de" stroke="#7c86a6" stroke-width="5"/><circle cx="1041" cy="224" r="51" fill="none" stroke="#667098" stroke-width="5" stroke-dasharray="5 4"/><circle cx="1041" cy="224" r="46" fill="#2c9fd4"/><circle cx="1014" cy="216" r="19" fill="#fbc92c"/><path d="M995 222h28q28-8 64 2a46 46 0 0 1-90 14z" fill="#20358b"/><path d="M996 228q22-6 42 2t47 0M998 241q22-6 42 2t42 0M1006 254q20-4 36 2t34-1M1008 218v40" fill="none" stroke="#fff" stroke-width="4"/><text x="1038" y="211" font-size="26" font-weight="bold" fill="#dff3ff" textLength="32" lengthAdjust="spacingAndGlyphs">EOT</text>
          </svg>
          <svg width="117" height="67" viewBox="84 303 351 201">
            <linearGradient id="slg" x2="0" y2="1"><stop stop-color="#d5453f"/><stop offset="1" stop-color="#b02725"/></linearGradient>
            <rect x="85.500" y="304.500" width="348" height="198" rx="15" fill="#fff" stroke="#ccc" stroke-width="3"/><rect x="99" y="320" width="321" height="37" fill="#ececec"/>
            <text x="108" y="345" font-size="20" font-weight="bold" fill="#000" stroke="#000" textLength="301" lengthAdjust="spacingAndGlyphs">4RENT-THESSALONIKI.COM</text>
            <path d="M122 398h60v46h-60zM129 396q0-23 23-23t23 23" fill="none" stroke="#111" stroke-width="9"/><path d="M138 417l14 15 18-26" fill="none" stroke="#d22" stroke-width="8"/>
            <text x="213" y="406" font-size="49" font-weight="bold" fill="#111" stroke="#111" textLength="204" lengthAdjust="spacingAndGlyphs">Site<tspan fill="#d22a2a" stroke="#d22a2a">Lock</tspan></text><text x="213" y="447" font-size="42" fill="#111" stroke="#111" textLength="204" lengthAdjust="spacingAndGlyphs">SECURE</text>
            <path d="M84 462h351v26q0 16-16 16H100q-16 0-16-16z" fill="url(#slg)"/><text x="108" y="494" font-size="33" font-weight="bold" fill="#a9d12f" textLength="122" lengthAdjust="spacingAndGlyphs">Passed</text><text x="256" y="494" class="dejavu" font-size="25" font-weight="bold" fill="#fff" textLength="174" lengthAdjust="spacingAndGlyphs">30-Aug-2025</text>
          </svg>
        </div>
        <p class="copyright">COPYRIGHT © 2017 - 2024 <strong>4RENT THESSALONIKI | ΕΟΤ 0933Ε81000827301</strong></p>
        <svg class="to-top" width="26" height="26" viewBox="0 0 26 26"><circle cx="13" cy="13" r="11.700" fill="none" stroke="#444" stroke-width="2.200"/><path d="M13 6l6 6.500h-4.300V20h-3.400v-7.500H7z" fill="#444"/></svg>
      </div>
    </footer>
  </main>

  <div class="scrollbar"><i class="up"></i><i class="thumb"></i><i class="down"></i></div>
</div>
</body>
</html>
```
FILE: styles.css
```css
* { box-sizing: border-box; }
body { margin: 0; width: 1920px; height: 1032px; overflow: hidden; display: flex; flex-direction: column; font-family: "Liberation Sans", Arial, sans-serif; background: #fff; }
svg { display: block; flex: none; }
.defs { position: absolute; width: 0; height: 0; }
.serif { font-family: "Liberation Serif", serif; }
.open { font-family: "Open Sans", sans-serif; }
.lato { font-family: Lato, sans-serif; }
.dejavu { font-family: "DejaVu Sans", sans-serif; }
h3, h4, p { margin: 0; }

/* browser frame */
.browser { height: 87px; background: #1f2120; flex: none; }
.tabstrip { display: flex; height: 40px; padding-left: 6px; }
.tab-search { width: 28px; height: 28px; margin: 6px 4px 0 0; padding: 0; border: 0; border-radius: 9px; background: #393b3a; display: flex; align-items: center; justify-content: center; }
.tab { width: 25px; flex: none; padding: 12px 0 0 4px; display: flex; font-style: normal; }
.tab svg { width: 16px; height: 16px; }
.tab::after { content: ""; width: 1px; height: 16px; margin-left: 4px; background: #4a4c4b; }
.tab-last::after { display: none; }
.tab-active { position: relative; width: 32px; height: 34px; margin: 6px 4px 0 2px; border-radius: 9px 9px 0 0; background: #3c3c3c; display: flex; align-items: center; justify-content: center; padding-bottom: 6px; }
.tab-active::before, .tab-active::after { content: ""; position: absolute; bottom: 0; width: 10px; height: 10px; }
.tab-active::before { left: -10px; background: radial-gradient(circle at 0 0, transparent 9.5px, #3c3c3c 10px); }
.tab-active::after { right: -10px; background: radial-gradient(circle at 100% 0, transparent 9.5px, #3c3c3c 10px); }
.new-tab { margin: 14px 0 0 8px; }
.window-controls { margin-left: auto; display: flex; gap: 35.5px; padding: 14px 17px 0 0; }
.toolbar { height: 47px; padding: 6px 0 7px; display: flex; background: #3c3c3c; border-radius: 8px 8px 0 0; border-bottom: 1px solid #494949; }
.nav { display: flex; gap: 20px; width: 120px; padding: 9px 0 0 14px; }
.omnibox { width: 1538px; height: 34px; border-radius: 17px; background: #282828; display: flex; align-items: center; padding: 0 15px 0 5px; }
.site-info { width: 24px; height: 24px; border-radius: 50%; background: #3c3c3c; display: flex; align-items: center; justify-content: center; }
.url { margin-left: 8px; font: 14px "Open Sans", sans-serif; letter-spacing: -.35px; color: #e6e6e6; flex: 1; }
.path { color: #b0b0b0; }
.translate { margin-right: 15px; }
.actions { display: flex; align-items: center; height: 34px; padding-left: 17px; }
.puzzle { margin-left: 18px; }
.divider { width: 2px; height: 16px; margin: 0 9px 0 17px; background: #5a5a5a; }
.verify { width: 119px; height: 34px; border-radius: 17px; background: #004a77; color: #c9e7ff; font: 12px "Open Sans", sans-serif; letter-spacing: -.25px; display: flex; align-items: center; gap: 6px; padding-left: 10px; white-space: nowrap; }
.menu { margin-left: 20px; }

/* left rail */
.viewport { flex: 1; display: flex; min-height: 0; }
.sidebar { width: 64px; background: linear-gradient(#404040 293px, #3c3c3c 293px); display: flex; flex-direction: column; color: #a2a2a2; }
.logo { height: 80px; background: #e03e3f; }
.side-links { display: flex; flex-direction: column; align-items: center; }
.side-links svg { height: 17px; margin: 20px 0; fill: currentColor; }
.cookie { margin: auto 0 15px 15px; }

/* promos */
.page { flex: 1; display: flex; flex-direction: column; min-width: 0; }
.illustration { height: 119px; padding-left: 899px; }
.promos { display: flex; gap: 23px; padding-left: 337px; height: 174px; }
.promo { height: 141px; border: solid #dedede; border-width: 1px 0; display: flex; }
.reviews { width: 540px; }
.offers { width: 541px; }
.stars { display: flex; fill: #ffc402; padding: 15px 0 0 1px; width: 278px; gap: 1.5px; }
.stars svg { width: 34px; height: 33px; }
.promo-text { flex: 1; padding-top: 7px; color: #e03e3f; font-size: 18px; line-height: 22px; }
.promo-text p { letter-spacing: -.2px; white-space: nowrap; }
.offer-badge { margin: 13px 18px 0 1px; }
.button { display: inline-flex; height: 48px; margin-top: 17px; padding: 10px 26px 0; border-radius: 3px; background: #e03e3f; color: #fff; fill: #fff; font-size: 16px; font-weight: bold; line-height: 32px; white-space: nowrap; }
.button span { margin-left: 4px; }

/* footer */
.footer { flex: 1; background: #f5f5f5; padding-left: 289px; }
.columns { display: flex; height: 461px; padding-left: 24px; }
.col { padding-top: 42px; }
.col-phone { width: 420px; }
.col-service { width: 521px; }
h4 { height: 53px; font-size: 13px; line-height: 18px; letter-spacing: .83px; color: #2b2b2b; padding-left: 1px; }
.col-service h4 { padding-left: 0; }
.item { display: flex; min-height: 45px; margin-bottom: 22px; color: #8a8a8a; padding-bottom: 3px; }
.ico { width: 36px; height: 45px; margin-bottom: -3px; padding-bottom: 2px; border-right: 1px solid #d8d8d8; display: flex; align-items: center; flex: none; }
.ico svg { fill: currentColor; }
.item div { padding-left: 14.5px; }
.col-service .item div { width: 400px; }
.item small { display: block; font-size: 13px; line-height: 18px; color: #bfbfbf; -webkit-text-stroke: .3px #bfbfbf; white-space: nowrap; }
.item b { display: block; font-size: 16px; line-height: 24px; margin: 1px 0 -1px; }
.col-phone .item b { color: #636363; }
.social { width: 300px; display: flex; flex-wrap: wrap; gap: 0 12px; padding: 1px 0 0 4px; font-size: 16px; font-weight: bold; line-height: 28px; color: #636363; }
.social a { display: flex; align-items: center; gap: 5px; }
.social svg { fill: currentColor; }
.badges { display: flex; flex-wrap: wrap; width: 440px; align-items: flex-start; padding-left: 1px; }
.stars.small { width: 150px; padding: 10px 0 0; gap: 1.5px; }
.stars.small svg { width: 28px; height: 28px; }
.google { margin-top: 6px; }
.trust { margin: 2px 0 -2px 10px; }
.fb { margin: 3px 13px 0 0; }
.holiday { margin-top: 3px; }
.col-links { width: 205px; padding-top: 24px; }
.col-links div { padding-bottom: 8px; border-bottom: 1px solid #d8d8d8; margin-bottom: 7px; }
.col-links div:last-child { border: 0; }
.col-links h3 { font-size: 18px; line-height: 22px; letter-spacing: -.18px; color: #5c5c5c; margin-bottom: 13px; }
.col-links p { font-size: 14px; line-height: 21px; color: #8a8a8a; }
.bottom { width: 1200px; border-top: 1px solid #d8d8d8; display: flex; }
.trust-marks { width: 537px; padding: 41px 0 0 25px; }
.copyright { width: 612px; padding-top: 24px; font-size: 13px; line-height: 20px; letter-spacing: -.1px; color: #8a8a8a; white-space: nowrap; }
.copyright strong { color: #444; }
.to-top { margin-top: 24px; }

.scrollbar { width: 15px; background: #2c2c2c; display: flex; flex-direction: column; align-items: center; }
.up, .down { width: 0; height: 0; border: solid transparent; border-width: 0 5px; }
.up { border-bottom: 7px solid #9f9f9f; margin-top: 5px; }
.down { border-top: 7px solid #9f9f9f; margin: auto 0 5px; }
.thumb { width: 9px; height: 225px; border-radius: 5px; background: #9f9f9f; margin-top: 690px; }
```
